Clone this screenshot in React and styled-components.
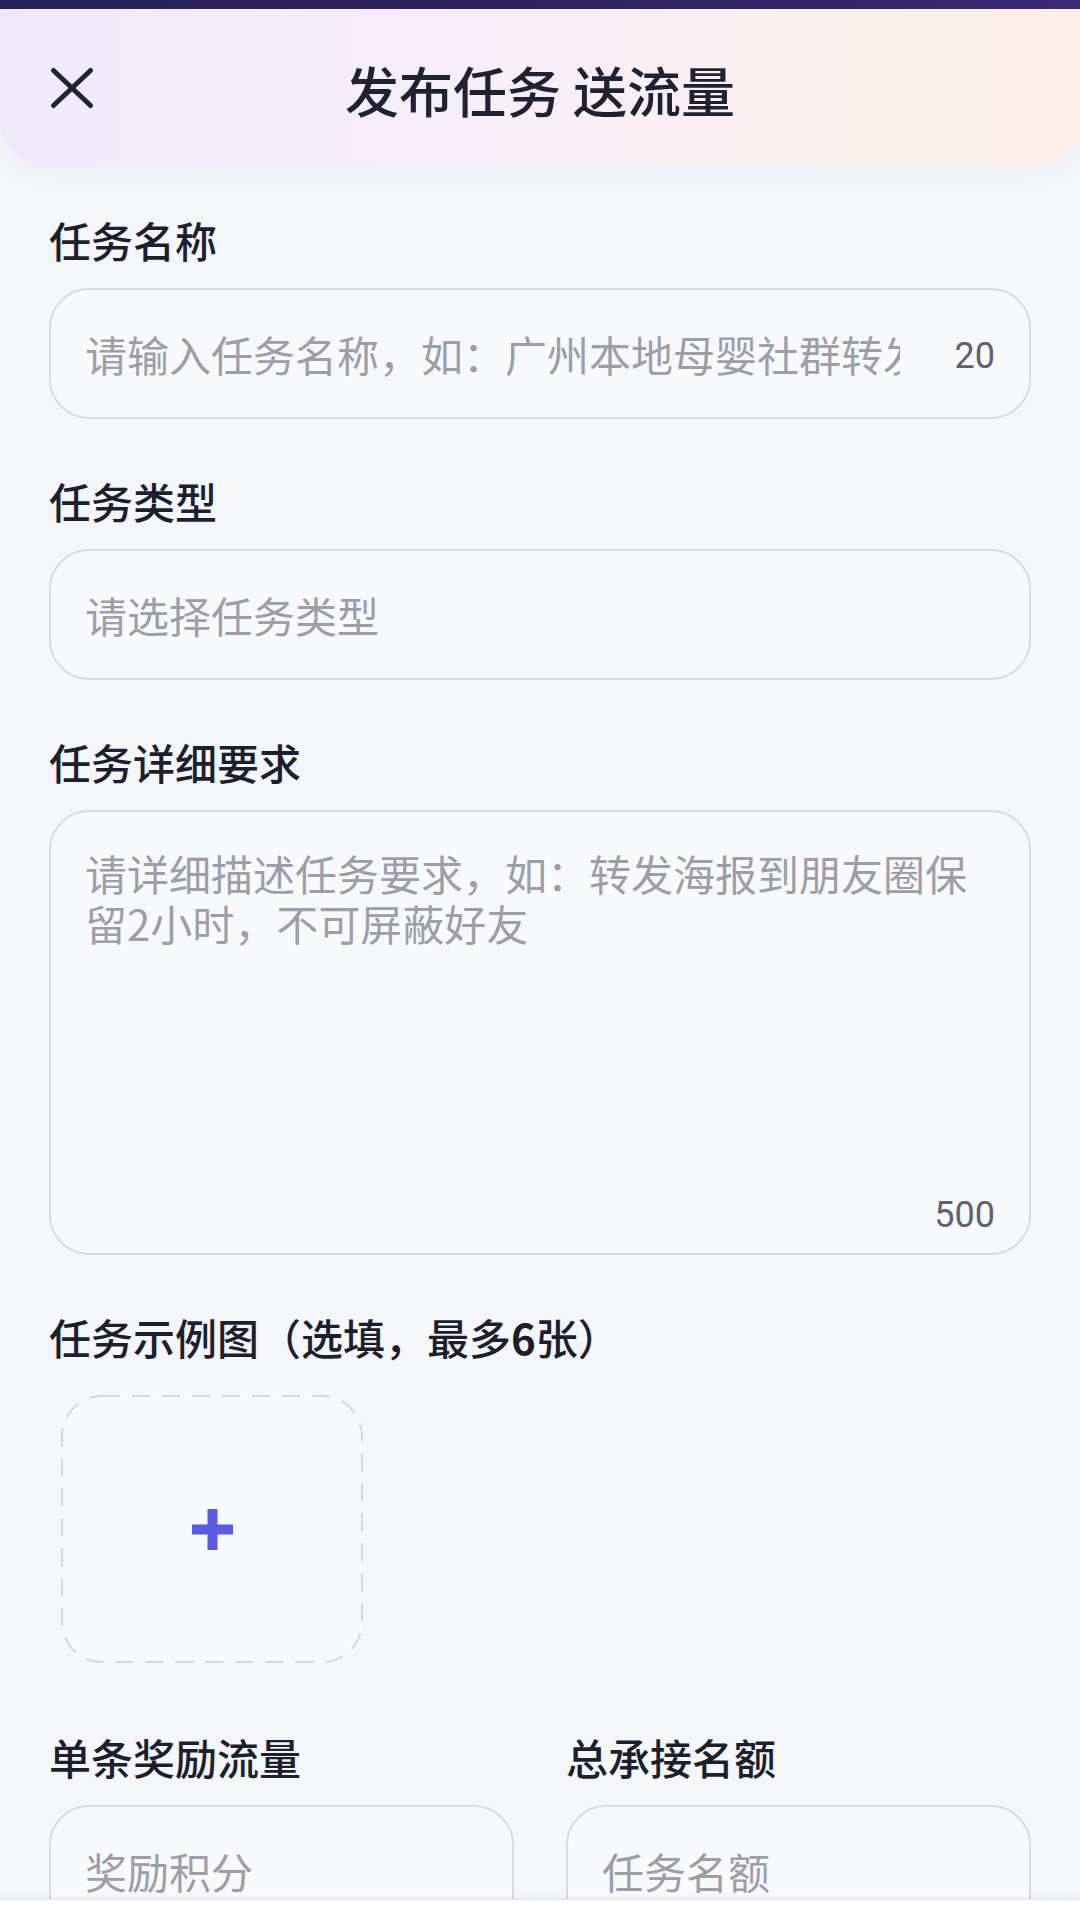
import React from 'react';
import styled, { createGlobalStyle } from 'styled-components';

const GlobalStyle = createGlobalStyle`
  * { box-sizing: border-box; }
  html, body {
    margin: 0;
    padding: 0;
    overflow: hidden;
  }
  body {
    background: #f4f6fa;
    font-family: "Noto Sans CJK SC", "Noto Sans", sans-serif;
    color: #1c1f2e;
  }
`;

const Page = styled.div`
  width: 1080px;
  min-height: 1920px;
  background: #f4f6fa;
  display: flex;
  flex-direction: column;
`;

const Backdrop = styled.div`
  height: 9px;
  background: linear-gradient(90deg, #272058 0%, #2d2360 45%, #3b2972 100%);
`;

const Header = styled.header`
  height: 157px;
  display: grid;
  grid-template-columns: 1fr auto 1fr;
  align-items: center;
  padding: 0 48px;
  background: linear-gradient(90deg, #efeafb 0%, #f5eef9 35%, #faeff2 65%, #fdf0e8 100%);
  border-radius: 0 0 44px 44px;
  box-shadow: 0 8px 18px rgba(120, 110, 160, 0.05);
`;

const CloseButton = styled.button`
  justify-self: start;
  width: 48px;
  height: 48px;
  padding: 0;
  border: none;
  background: transparent;
  display: grid;
  place-items: center;
  color: #1f2537;
`;

const Title = styled.h1`
  margin: 4px 0 0;
  font-size: 54px;
  line-height: 64px;
  font-weight: 500;
  color: #1e2232;
  white-space: pre;
`;

const Form = styled.main`
  display: flex;
  flex-direction: column;
  gap: 53px;
  padding: 45px 49px 0;
`;

const Field = styled.section`
  display: flex;
  flex-direction: column;
  gap: 19px;
  min-width: 0;
`;

const Label = styled.label`
  font-size: 42px;
  line-height: 58px;
  font-weight: 500;
  color: #1c1f2e;
  white-space: nowrap;
`;

const Bold = styled.b`
  font-weight: 700;
`;

const InputBox = styled.div`
  height: 131px;
  border: 2px solid #d8dbe1;
  border-radius: 40px;
  background: #f8f9fc;
  display: flex;
  align-items: center;
  gap: 55px;
  padding: 0 34px 0 34px;
`;

const TextInput = styled.input`
  flex: 1;
  min-width: 0;
  border: none;
  outline: none;
  background: transparent;
  padding: 0;
  font-family: inherit;
  font-size: 42px;
  color: #1c1f2e;
  &::placeholder {
    color: #9c9fa9;
  }
`;

const Counter = styled.span`
  font-family: Roboto, "Noto Sans", sans-serif;
  font-size: 36px;
  line-height: 43px;
  margin-top: 6px;
  color: #5e6270;
`;

const TextAreaBox = styled.div`
  height: 445px;
  border: 2px solid #d8dbe1;
  border-radius: 40px;
  background: #f8f9fc;
  display: flex;
  flex-direction: column;
  padding: 36px 34px 16px 34px;
`;

const TextArea = styled.textarea`
  flex: 1;
  resize: none;
  border: none;
  outline: none;
  background: transparent;
  padding: 0;
  font-family: inherit;
  font-size: 42px;
  line-height: 50px;
  color: #1c1f2e;
  overflow: hidden;
  &::placeholder {
    color: #9c9fa9;
  }
`;

const CounterRow = styled.div`
  display: flex;
  justify-content: flex-end;
`;

const UploadGrid = styled.div`
  display: flex;
  gap: 24px;
  padding: 10px 12px 12px;
`;

const UploadTile = styled.button`
  position: relative;
  width: 302px;
  height: 268px;
  padding: 0;
  border: none;
  border-radius: 40px;
  background: #f7f9fc;
  display: grid;
  place-items: center;
`;

const DashedFrame = styled.svg`
  position: absolute;
  inset: 0;
  width: 100%;
  height: 100%;
  pointer-events: none;
`;

const TwoCols = styled.div`
  display: grid;
  grid-template-columns: 1fr 1fr;
  column-gap: 52px;
`;

const Footer = styled.footer`
  position: fixed;
  left: 0;
  right: 0;
  bottom: 0;
  height: 21px;
  background: #ffffff;
  border-top: 1px solid #e1e4ea;
  box-shadow: 0 -3px 8px rgba(30, 40, 70, 0.03);
`;

function CloseIcon() {
  return (
    <svg width="48" height="48" viewBox="0 0 48 48" fill="none">
      <path
        d="M5.5 6.5 L42.5 41.5 M42.5 6.5 L5.5 41.5"
        stroke="currentColor"
        strokeWidth="5"
        strokeLinecap="round"
      />
    </svg>
  );
}

function PlusIcon() {
  return (
    <svg width="41" height="41" viewBox="0 0 41 41">
      <rect x="15.5" y="0" width="10" height="41" fill="#5a5be0" />
      <rect x="0" y="15.5" width="41" height="10" fill="#5a5be0" />
    </svg>
  );
}

export default function App() {
  return (
    <>
      <GlobalStyle />
      <Page>
        <Backdrop />
        <Header>
          <CloseButton aria-label="关闭">
            <CloseIcon />
          </CloseButton>
          <Title>发布任务 送流量</Title>
          <span />
        </Header>

        <Form>
          <Field>
            <Label>任务名称</Label>
            <InputBox>
              <TextInput placeholder="请输入任务名称，如：广州本地母婴社群转发" />
              <Counter>20</Counter>
            </InputBox>
          </Field>

          <Field>
            <Label>任务类型</Label>
            <InputBox>
              <TextInput placeholder="请选择任务类型" readOnly />
            </InputBox>
          </Field>

          <Field>
            <Label>任务详细要求</Label>
            <TextAreaBox>
              <TextArea placeholder="请详细描述任务要求，如：转发海报到朋友圈保留2小时，不可屏蔽好友" />
              <CounterRow>
                <Counter>500</Counter>
              </CounterRow>
            </TextAreaBox>
          </Field>

          <Field>
            <Label>
              任务示例图（选填，最多<Bold>6</Bold>张）
            </Label>
            <UploadGrid>
              <UploadTile aria-label="上传图片">
                <DashedFrame viewBox="0 0 302 268" preserveAspectRatio="none">
                  <rect
                    x="1"
                    y="1"
                    width="300"
                    height="266"
                    rx="40"
                    ry="40"
                    fill="none"
                    stroke="#d3d7de"
                    strokeWidth="2"
                    strokeDasharray="18 12"
                  />
                </DashedFrame>
                <PlusIcon />
              </UploadTile>
            </UploadGrid>
          </Field>

          <TwoCols>
            <Field>
              <Label>单条奖励流量</Label>
              <InputBox>
                <TextInput placeholder="奖励积分" />
              </InputBox>
            </Field>
            <Field>
              <Label>总承接名额</Label>
              <InputBox>
                <TextInput placeholder="任务名额" />
              </InputBox>
            </Field>
          </TwoCols>
        </Form>
        <Footer />
      </Page>
    </>
  );
}
